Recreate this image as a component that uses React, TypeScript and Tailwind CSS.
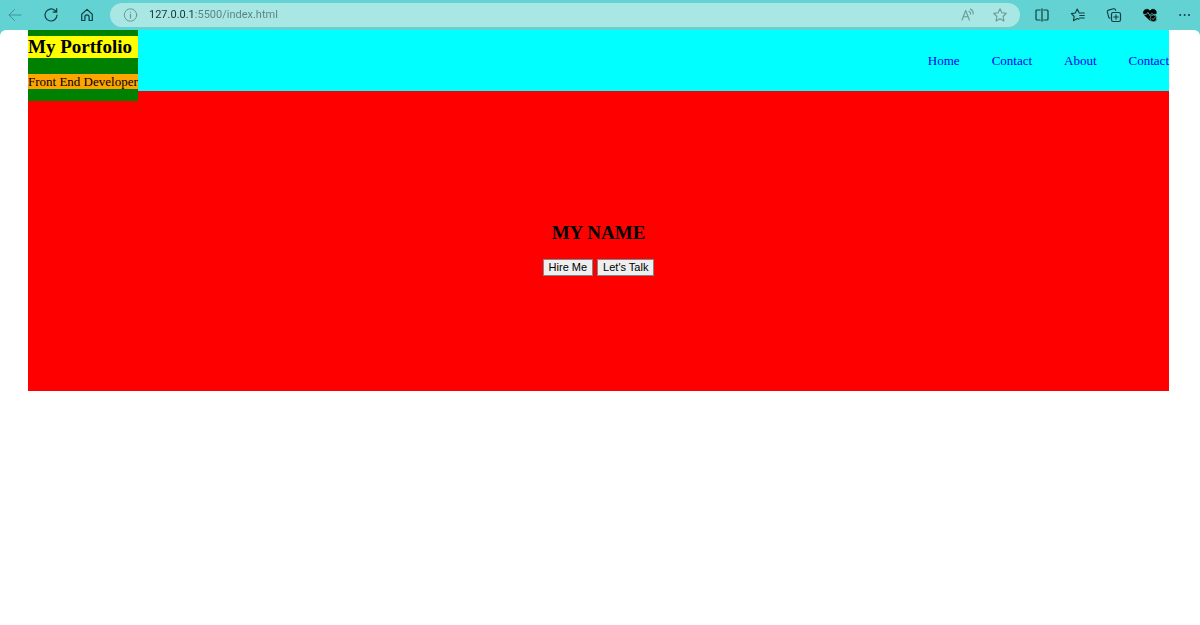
import type { ReactNode } from "react";

type IconButtonProps = {
  label: string;
  className?: string;
  children: ReactNode;
};

function IconButton({ label, className = "w-9", children }: IconButtonProps) {
  return (
    <button
      type="button"
      aria-label={label}
      className={`flex h-6 shrink-0 items-center justify-center ${className}`}
    >
      <svg
        width="16"
        height="16"
        viewBox="0 0 16 16"
        fill="none"
        stroke="currentColor"
        strokeLinecap="round"
        strokeLinejoin="round"
        aria-hidden="true"
      >
        {children}
      </svg>
    </button>
  );
}

const navLinks = [
  { id: 1, text: "Home" },
  { id: 2, text: "Contact" },
  { id: 3, text: "About" },
  { id: 4, text: "Contact" },
];

function BrowserBar() {
  return (
    <div className="flex h-[30px] items-center text-[#123f40]">
      <div className="flex gap-3 pl-[3px] pr-[11px]">
        <IconButton label="Back" className="w-6 text-[#439495]">
          <path d="M14 8H2M7.5 2.5L2 8l5.5 5.5" />
        </IconButton>
        <IconButton label="Refresh" className="w-6">
          <path d="M14 8a6 6 0 1 1-2-4.5L13.5 5M13.7 1.7V5.2H10.2" strokeWidth="1.2" />
        </IconButton>
        <IconButton label="Home page" className="w-6">
          <path d="M2.7 7.2L8 2.4l5.3 4.8v6.3h-3.2V10a2.1 2.1 0 0 0-4.2 0v3.5H2.7z" strokeWidth="1.2" />
        </IconButton>
      </div>

      <div className="flex h-6 min-w-0 flex-1 items-center rounded-full bg-[#a8e7e4] px-2 text-[#6b9997]">
        <IconButton label="Site information" className="w-6">
          <circle cx="8.5" cy="8" r="6.2" />
          <path d="M8.5 7.3v3.8M8.5 5v.2" strokeWidth="1.2" />
        </IconButton>
        <input
          type="text"
          aria-label="Address"
          defaultValue="127.0.0.1:5500/index.html"
          className="ml-[7px] min-w-0 flex-1 bg-linear-to-r from-[#143536] from-[44px] to-[#57807f] to-[44px] bg-clip-text font-['Roboto',sans-serif] text-[11px] text-transparent caret-black outline-none"
        />
        <IconButton label="Read aloud" className="w-8">
          <path d="M2 13L5.7 3.5l3.7 9.5M3.3 9.8h4.8M9 4.2a3 3 0 0 1 1.6 3M10.4 2a5.4 5.4 0 0 1 2.8 5" strokeWidth="1.1" />
        </IconButton>
        <IconButton label="Add to favorites" className="ml-1 w-6">
          <path d="M8 1.8l1.9 4 4.4.6-3.2 3.1.8 4.4L8 11.8l-3.9 2.1.8-4.4L1.7 6.4l4.4-.6z" strokeWidth="1.1" />
        </IconButton>
      </div>

      <div className="flex pl-1">
        <IconButton label="Split screen">
          <path d="M6.2 3H3a1 1 0 0 0-1 1v8a1 1 0 0 0 1 1h3.2M9.8 3H13a1 1 0 0 1 1 1v8a1 1 0 0 1-1 1H9.8M8 1.8v12.4" strokeWidth="1.2" />
        </IconButton>
        <IconButton label="Favorites">
          <path d="M14.3 6H9.2L7.2 2.1 5.3 6 1.4 6.6l2.8 2.9-.8 4.2 3.9-2.2 1.6.7M9.8 8.5h4.5M9.6 11h4.7" strokeWidth="1.1" />
        </IconButton>
        <IconButton label="Collections">
          <path d="M3.9 11.1a1.6 1.6 0 0 1-1.3-1.3L1.4 5.1a1.6 1.6 0 0 1 1.2-2l4.9-1.3a1.6 1.6 0 0 1 2 1.2l.1.5" strokeWidth="1.1" />
          <rect x="5.5" y="5.5" width="9" height="9" rx="1.8" strokeWidth="1.2" />
          <path d="M10 7.7v4.6M7.7 10h4.6" strokeWidth="1.1" />
        </IconButton>
        <IconButton label="Browser essentials" className="w-9 text-black">
          <path
            d="M8 13.4L2.3 8C.9 6.3 1.2 3.7 2.9 2.8 4.8 1.8 6.8 2.3 8 4c1.2-1.7 3.1-2.2 4.9-1.2 1.7.9 2 3.5.6 5.2z"
            fill="currentColor"
            strokeWidth=".6"
          />
          <path d="M1 7.4h3.4l1.5-2L8 8.7l1.8-2.4 1.2 1.1h3.6" stroke="#62d2d2" strokeWidth=".8" />
          <circle cx="11.4" cy="11.4" r="3.3" fill="currentColor" stroke="#62d2d2" strokeWidth=".6" />
          <path d="M10 11.5l1 1 1.8-2" stroke="#62d2d2" strokeWidth=".8" />
        </IconButton>
        <IconButton label="Settings and more" className="w-8">
          <g fill="currentColor" stroke="none">
            <circle cx="4.2" cy="8" r="1" />
            <circle cx="8.6" cy="8" r="1" />
            <circle cx="13" cy="8" r="1" />
          </g>
        </IconButton>
      </div>
    </div>
  );
}

function Header() {
  return (
    <header className="flex h-[61px] items-start justify-between bg-[#00ffff]">
      <div className="relative z-10 bg-[#008000] pt-[6px] pb-3">
        <h2 className="bg-[#ffff00] text-[19px] leading-[22px] font-bold">My Portfolio</h2>
        <p className="mt-4 bg-[#ffa500] text-[13px] leading-[15px]">Front End Developer</p>
      </div>
      <nav className="self-center">
        <ul className="flex gap-8 text-[13px] leading-[15px] text-[#0000ee]">
          {navLinks.map((link) => (
            <li key={link.id}>
              <a href="#">{link.text}</a>
            </li>
          ))}
        </ul>
      </nav>
    </header>
  );
}

function Hero() {
  return (
    <section className="flex h-[300px] flex-col items-center justify-center bg-[#ff0000] pt-[15px]">
      <h2 className="text-[19px] leading-[22px] font-bold">MY NAME</h2>
      <div className="mt-[15px] flex gap-1 font-['Liberation_Sans',Arial,sans-serif] text-[11px] leading-[13px]">
        <button type="button" className="border border-[#858585] bg-[#efefef] px-[5px] py-px">
          Hire Me
        </button>
        <button type="button" className="border border-[#858585] bg-[#efefef] px-[5px] py-px">
          Let's Talk
        </button>
      </div>
    </section>
  );
}

export default function App() {
  return (
    <div className="flex min-h-screen flex-col bg-[#62d2d2]">
      <BrowserBar />
      <main className="flex-1 rounded-t-md bg-white pl-7 pr-[31px] font-['Liberation_Serif','Times_New_Roman',serif] text-black">
        <Header />
        <Hero />
      </main>
    </div>
  );
}
